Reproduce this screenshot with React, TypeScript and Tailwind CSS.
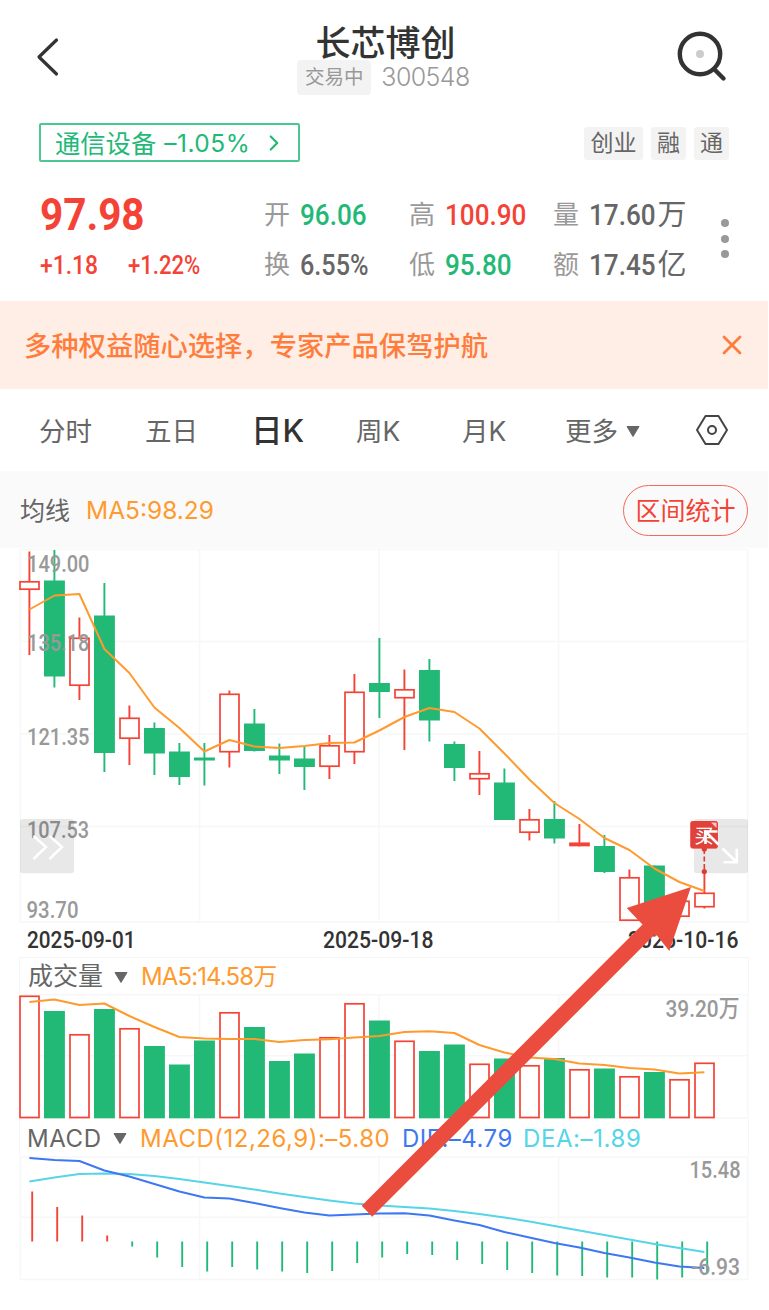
import { ChevronRight, X } from "lucide-react";
import clsx from "clsx";

type Trend = "up" | "down";

interface Candle {
  trend: Trend;
  high: number;
  top: number;
  bottom: number;
  low: number;
}

const UP = "#f44336";
const DOWN = "#22b977";
const ORANGE = "#ff9a2e";
const GRID = "#f7f7f7";

const STEP = 25;
const FIRST_X = 29.4;

const c = (trend: Trend, high: number, top: number, bottom: number, low: number): Candle => ({
  trend,
  high,
  top,
  bottom,
  low,
});

const CANDLES: Candle[] = [
  c("up", 551.5, 581, 590, 655),
  c("down", 550, 580.5, 676.5, 687.5),
  c("up", 617.5, 637.5, 686, 700),
  c("down", 583, 615.5, 753, 772),
  c("up", 705.5, 717.5, 739, 765),
  c("down", 722.5, 728, 753.5, 775),
  c("down", 743, 751.5, 777, 785),
  c("down", 743, 757.5, 760.5, 785.5),
  c("up", 690.5, 693.5, 752.5, 767.5),
  c("down", 709, 723.5, 751, 751.5),
  c("down", 743.5, 755.5, 760.5, 774),
  c("down", 746, 758.5, 767, 790),
  c("up", 735, 745, 767, 779),
  c("up", 674, 691.5, 752.5, 764),
  c("down", 638, 683, 692, 718),
  c("up", 669.5, 689, 698.5, 750),
  c("down", 659, 670, 720.5, 741.5),
  c("down", 741.5, 744, 768, 781),
  c("up", 751, 773, 779.5, 795),
  c("down", 768.5, 782.5, 820, 820),
  c("up", 809, 819, 833, 840.5),
  c("down", 801, 819, 838.5, 843.5),
  c("up", 824, 842.5, 846.3, 846.3),
  c("down", 835, 846, 872, 873),
  c("up", 869.5, 877, 921, 921),
  c("down", 865.5, 865.5, 905, 905),
  c("up", 900, 900.5, 917, 917),
  c("up", 871.5, 892.5, 907.5, 908.5),
];

const PRICE_MA = [
  609.5, 595.5, 594, 649, 673, 707.5, 728, 751.5, 740, 746.5, 748, 746, 743, 742.5, 730.5, 717, 708, 712,
  728.5, 753.5, 779.5, 803, 819, 838, 850, 868.5, 882, 891,
];

const VOLUME_TOP = [
  995.5, 1011, 1034, 1009, 1028, 1046, 1064.5, 1040.5, 1012, 1027, 1061, 1053.5, 1037, 1003, 1020.5, 1040.5,
  1051, 1044.5, 1063.5, 1058.5, 1065, 1058, 1069, 1068.5, 1076, 1072, 1079, 1062.5,
];

const VOLUME_MA = [
  1002, 999.5, 1005, 1003.5, 1016, 1027, 1037, 1038.5, 1039, 1039, 1042, 1040, 1039.3, 1037.5, 1036, 1032,
  1031.2, 1033, 1045, 1052.5, 1057.5, 1059, 1063.5, 1065, 1068, 1069.5, 1073.5, 1072.3,
];

const MACD_ZERO = 1241.5;
const MACD_BARS = [
  1191.5, 1207, 1215.5, 1235.5, 1246.5, 1257.5, 1267, 1271.5, 1267, 1269.5, 1271.5, 1273, 1271, 1263, 1257.5,
  1254, 1255, 1260, 1264, 1270, 1273, 1275.5, 1276, 1277.5, 1277.5, 1279.5, 1277.5, 1273,
];

const DIF = [
  1158, 1160, 1161, 1170.5, 1176.5, 1184, 1191.5, 1197.5, 1198.5, 1203, 1208, 1212.5, 1215.5, 1214.5, 1213.5,
  1213.3, 1215.5, 1220.5, 1225, 1232, 1237.5, 1243, 1247.5, 1253, 1257.5, 1262.5, 1266.5, 1268,
];

const DEA = [
  1181.5, 1177.5, 1174, 1173.5, 1174, 1176, 1179, 1182.5, 1186, 1189.5, 1193.5, 1197, 1200.5, 1203.5, 1205.5,
  1207, 1208.5, 1211, 1214, 1217.5, 1221.5, 1226, 1230.5, 1235, 1239.5, 1244, 1248, 1252,
];

const xAt = (i: number) => FIRST_X + i * STEP;
const toPoints = (ys: number[]) => ys.map((y, i) => `${xAt(i)},${y}`).join(" ");

function Grid({ top, bottom, rows }: { top: number; bottom: number; rows: number[] }) {
  return (
    <g stroke={GRID} strokeWidth={1.5}>
      {[20.2, 199.5, 379, 558.6, 747.8].map((x) => (
        <line key={x} x1={x} x2={x} y1={top} y2={bottom} />
      ))}
      {rows.map((y) => (
        <line key={y} x1={20} x2={748} y1={y} y2={y} />
      ))}
    </g>
  );
}

function Line({ ys, color }: { ys: number[]; color: string }) {
  return <polyline points={toPoints(ys)} fill="none" stroke={color} strokeWidth={2} strokeLinejoin="round" />;
}

interface AxisLabelProps {
  x: number;
  y: number;
  width: number;
  children: string;
}

function AxisLabel({ x, y, width, children }: AxisLabelProps) {
  return (
    <text
      x={x}
      y={y}
      textLength={width}
      lengthAdjust="spacingAndGlyphs"
      className="fill-[#999] text-[24px] font-medium"
      fontFamily="Roboto, 'Noto Sans CJK SC', sans-serif"
    >
      {children}
    </text>
  );
}

function Bar({ x, top, bottom, trend }: { x: number; top: number; bottom: number; trend: Trend }) {
  if (trend === "down") {
    return <rect x={x - 10.4} y={top} width={20.9} height={bottom - top} fill={DOWN} />;
  }
  return (
    <rect
      x={x - 9.4}
      y={top + 0.8}
      width={19}
      height={Math.max(bottom - top - 1.6, 1)}
      fill={bottom - top < 5 ? UP : "#fff"}
      stroke={UP}
      strokeWidth={1.7}
    />
  );
}

function PriceChart() {
  return (
    <svg viewBox="19 548 730 375" className="block ml-[19px] w-[730px] h-[375px]">
      <Grid top={549} bottom={922} rows={[549.4, 641.6, 734, 826.4, 922]} />
      {CANDLES.map((k, i) => (
        <g key={i}>
          <line x1={xAt(i)} x2={xAt(i)} y1={k.high} y2={k.low} stroke={k.trend === "up" ? UP : DOWN} strokeWidth={1.9} />
          <Bar x={xAt(i)} top={k.top} bottom={k.bottom} trend={k.trend} />
        </g>
      ))}
      <Line ys={PRICE_MA} color={ORANGE} />
      <AxisLabel x={27} y={572.2} width={62.5}>149.00</AxisLabel>
      <AxisLabel x={27} y={651.2} width={62.5}>135.18</AxisLabel>
      <AxisLabel x={27} y={745.2} width={62.5}>121.35</AxisLabel>
      <AxisLabel x={27} y={838.2} width={62}>107.53</AxisLabel>
      <AxisLabel x={26.5} y={917.7} width={52}>93.70</AxisLabel>

      {/* 展开 / 全屏按钮 */}
      <rect x={20} y={819} width={54} height={54.3} rx={3} fill="#000" opacity={0.09} />
      <path d="M33.5 836l12.5 11-12.5 12M49.5 836l12.500 11-12.500 12" fill="none" stroke="#fff" strokeWidth={2.5} />
      <rect x={694} y={819} width={54} height={54.3} rx={3} fill="#000" opacity={0.09} />

      {/* 买点标记 */}
      <line x1={704.3} x2={704.3} y1={849} y2={871} stroke="#dc3c34" strokeWidth={1.6} strokeDasharray="5 2.5" />
      <circle cx={704.3} cy={849} r={2.6} fill="#dc3c34" />
      <circle cx={704.3} cy={871.5} r={2.6} fill="#dc3c34" />
      <rect x={690.8} y={821.5} width={26.6} height={26.6} rx={1.5} fill="#df423a" stroke="#f0392f" />
      <path d="M711 822.5h5.500v5.500z" fill="#fff" opacity={0.7} />
      <text x={694.5} y={842.5} className="fill-white text-[19px]" fontFamily="'Noto Sans CJK SC', sans-serif">
        买
      </text>
      <path
        d="M718.5 844.500l-13-13M717.500 831.500h-12v12.500M722.500 848.500l14 13.500M723.500 862.200h13.300v-13.500"
        fill="none"
        stroke="#fff"
        strokeWidth={2.6}
      />
    </svg>
  );
}

function VolumeChart() {
  return (
    <svg viewBox="19 994 730 125" className="block ml-[19px] w-[730px] h-[125px] overflow-visible">
      <Grid top={994} bottom={1118} rows={[994.8, 1055.8, 1118]} />
      {VOLUME_TOP.map((top, i) => (
        <Bar key={i} x={xAt(i)} top={top} bottom={1118.3} trend={CANDLES[i].trend} />
      ))}
      <Line ys={VOLUME_MA} color={ORANGE} />
      <AxisLabel x={665.5} y={1017} width={74}>39.20万</AxisLabel>
    </svg>
  );
}

function MacdChart() {
  return (
    <svg viewBox="19 1156 730 125" className="block ml-[19px] w-[730px] h-[125px] overflow-visible">
      <Grid top={1157} bottom={1279.5} rows={[1157, 1217.3, 1279.4]} />
      {MACD_BARS.map((y, i) => (
        <line
          key={i}
          x1={xAt(i) + 2.8}
          x2={xAt(i) + 2.8}
          y1={MACD_ZERO}
          y2={y}
          stroke={y < MACD_ZERO ? UP : DOWN}
          strokeWidth={1.9}
        />
      ))}
      <Line ys={DEA} color="#56d4e8" />
      <Line ys={DIF} color="#3d78f2" />
      <AxisLabel x={689.5} y={1178} width={51}>15.48</AxisLabel>
      <AxisLabel x={691} y={1275.3} width={49}>-6.93</AxisLabel>
    </svg>
  );
}

function Caret() {
  return (
    <svg viewBox="0 0 14 11" className="w-[14px] h-[11px] shrink-0">
      <path d="M1 .5h12L7 10.500z" fill="#666" stroke="#666" strokeLinejoin="round" />
    </svg>
  );
}

// Narrow numerals, as in the quote board
function Num({ children, className }: { children: string; className?: string }) {
  return (
    <span
      className={clsx(
        "inline-block origin-left whitespace-nowrap font-['Roboto','Noto_Sans_CJK_SC',sans-serif] font-medium",
        className,
      )}
    >
      {children}
    </span>
  );
}

const QUOTES = [
  { label: "开", value: "96.06", color: "text-[#22b977]" },
  { label: "高", value: "100.90", color: "text-[#f44336]" },
  { label: "量", value: "17.60", unit: "万", color: "text-[#666]" },
  { label: "换", value: "6.55%", color: "text-[#666]" },
  { label: "低", value: "95.80", color: "text-[#22b977]" },
  { label: "额", value: "17.45", unit: "亿", color: "text-[#666]" },
];

function Header() {
  return (
    <header className="flex h-[105px] justify-between pl-[36px] pr-[40px]">
      <svg viewBox="0 0 24 40" className="mt-[37px] w-[24px] h-[40px]">
        <path d="M20.5 3L3 20l17.500 17" fill="none" stroke="#333" strokeWidth={3.2} strokeLinecap="round" strokeLinejoin="round" />
      </svg>
      <div className="flex flex-col items-center pl-[31px] pt-[25px]">
        <h1 className="pl-[4px] text-[35px] leading-[36px] font-medium text-[#333]">长芯博创</h1>
        <div className="-mt-[2px] flex items-center gap-[10px]">
          <span className="flex h-[35px] w-[74px] items-center justify-center rounded-[4px] bg-[#f3f3f3] text-[19.5px] text-[#999]">
            交易中
          </span>
          <span className="text-[25px] font-light tracking-[-0.6px] text-[#999]">300548</span>
        </div>
      </div>
      <svg viewBox="0 0 52 52" className="mt-[31px] w-[52px] h-[52px]">
        <circle cx="24" cy="23" r="20.2" fill="none" stroke="#333" strokeWidth={4.4} />
        <path d="M38 38l9.500 9.500" stroke="#333" strokeWidth={4.4} strokeLinecap="round" />
        <circle cx="24" cy="23" r="4" fill="#ccc" />
      </svg>
    </header>
  );
}

function SectorRow() {
  return (
    <div className="flex h-[57px] items-start justify-between pl-[39px] pr-[39px] pt-[18px]">
      <div className="flex h-[39px] w-[261px] items-center rounded-[2px] border-2 border-[#4dc792] pl-[14px] text-[25.3px] text-[#22b977]">
        <span className="whitespace-nowrap pt-[2px]">通信设备</span>
        <span className="ml-[8px] w-[97px] whitespace-nowrap pt-[2px] text-[24.5px] tracking-[0.5px]">–1.05%</span>
        <ChevronRight size={26} strokeWidth={2} />
      </div>
      <div className="mt-[4px] flex gap-[8px] text-[23px] text-[#666]">
        <span className="flex h-[33px] w-[59px] items-center justify-center rounded-[3px] bg-[#f3f3f3]">创业</span>
        <span className="flex h-[33px] w-[35px] items-center justify-center rounded-[3px] bg-[#f3f3f3]">融</span>
        <span className="flex h-[33px] w-[35px] items-center justify-center rounded-[3px] bg-[#f3f3f3]">通</span>
      </div>
    </div>
  );
}

function QuoteBoard() {
  return (
    <section className="flex h-[139px] pl-[40px] pt-[28px]">
      <div className="w-[224px]">
        <div className="h-[50px] leading-[51px]">
          <Num className="scale-x-[0.93] text-[43.5px] !font-bold text-[#f44336]">97.98</Num>
        </div>
        <div className="flex h-[50px] text-[26px] leading-[51px] text-[#f44336]">
          <Num className="w-[88px] scale-x-[0.88]">+1.18</Num>
          <Num className="scale-x-[0.85]">+1.22%</Num>
        </div>
      </div>
      <div className="grid w-[441px] grid-cols-[145px_144px_152px] auto-rows-[50px]">
        {QUOTES.map((q) => (
          <div key={q.label} className="flex items-center leading-[50px]">
            <span className="mr-[10px] text-[26px] text-[#999]">{q.label}</span>
            <Num className={clsx("text-[30px]", q.value.includes("%") ? "scale-x-[0.84]" : "scale-x-[0.87]", q.color)}>
              {q.value}
            </Num>
            {q.unit && <span className="-ml-[8px] text-[29px] text-[#666]">{q.unit}</span>}
          </div>
        ))}
      </div>
      <div className="ml-[16px] mt-[29px] flex flex-col gap-[7.5px]">
        <i className="size-2 rounded-full bg-[#999]" />
        <i className="size-2 rounded-full bg-[#999]" />
        <i className="size-2 rounded-full bg-[#999]" />
      </div>
    </section>
  );
}

function Tabs() {
  return (
    <nav className="flex h-[82px] items-center pl-[39px] text-[26.5px] text-[#666]">
      <span className="w-[106px] pt-[3px]">分时</span>
      <span className="w-[106px] pt-[3px]">五日</span>
      <span className="w-[105px] pt-[1px] text-[31.5px] font-medium text-[#333]">日K</span>
      <span className="w-[106px] pt-[3px]">周K</span>
      <span className="w-[103px] pt-[3px]">月K</span>
      <span className="flex w-[130px] items-center gap-[8px] pt-[3px]">
        更多
        <Caret />
      </span>
      <svg viewBox="0 0 34 32" className="w-[34px] h-[32px]">
        <path
          d="M10.5 2h13L32 16l-8.500 14h-13L2 16z"
          fill="none"
          stroke="#444"
          strokeWidth={2}
          strokeLinejoin="round"
        />
        <circle cx="17" cy="16" r="4" fill="none" stroke="#444" strokeWidth={2} />
      </svg>
    </nav>
  );
}

export default function App() {
  return (
    <div className="relative h-[1310px] w-[768px] overflow-hidden bg-white font-['Inter','Noto_Sans_CJK_SC',sans-serif]">
      <Header />
      <SectorRow />
      <QuoteBoard />

      <div className="flex h-[88px] items-center justify-between bg-[#ffeee5] pl-[24px] pr-[20px] text-[27.3px] font-medium text-[#ff7d3c]">
        <span className="pt-[4px]">多种权益随心选择，专家产品保驾护航</span>
        <X size={32} strokeWidth={2.1} />
      </div>

      <Tabs />

      <div className="flex h-[77px] items-center bg-[#fafafa] pl-[20px] pr-[20px] pt-[2px] text-[25px]">
        <span className="pt-[2px] text-[#666]">均线</span>
        <span className="ml-[16px] text-[24.5px] text-[#ff9a2e]">MA5:98.29</span>
        <button className="ml-auto flex h-[51px] w-[125px] items-center justify-center rounded-full border-[1.5px] border-[#f4675d] pt-[2px] text-[#f44336]">
          区间统计
        </button>
      </div>

      <PriceChart />

      <div className="flex h-[34px] items-center text-[24px] leading-[36px] text-[#333]">
        <Num className="ml-[27px] w-[296px] scale-x-[0.865]">2025-09-01</Num>
        <Num className="w-[305px] scale-x-[0.88]">2025-09-18</Num>
        <Num className="scale-x-[0.88]">2025-10-16</Num>
      </div>

      <div className="ml-[19px] flex h-[37px] w-[730px] items-center border-x border-t border-[#f5f5f5] pl-[8px] text-[25px] text-[#666]">
        <span className="pt-[2px]">成交量</span>
        <span className="ml-[11px] flex w-[27px] pt-[2px]">
          <Caret />
        </span>
        <span className="pt-[2px] text-[24px] tracking-[-0.9px] text-[#ff9a2e]">MA5:14.58万</span>
      </div>

      <VolumeChart />

      <div className="ml-[19px] flex h-[37px] w-[730px] items-center whitespace-nowrap border-x border-[#f5f5f5] pl-[7px] pt-[2px] text-[24px]">
        <span className="w-[86px] tracking-[0.6px] text-[#666]">MACD</span>
        <span className="flex w-[27px]">
          <Caret />
        </span>
        <span className="w-[262px] tracking-[0.5px] text-[#ff9a2e]">MACD(12,26,9):–5.80</span>
        <span className="w-[121px] tracking-[0.5px] text-[#3d78f2]">DIF:–4.79</span>
        <span className="tracking-[0.6px] text-[#56d4e8]">DEA:–1.89</span>
      </div>

      <MacdChart />

      {/* 手绘箭头，指向买点 */}
      <svg viewBox="360 885 335 335" className="pointer-events-none absolute left-[360px] top-[885px] w-[335px] h-[335px]">
        <polygon
          points="691,887 626.7,908 642.5,924.5 361.7,1205.7 372.2,1216.8 653.5,935.8 657,935.5 669.3,951"
          fill="#ea4c3e"
        />
      </svg>
    </div>
  );
}
